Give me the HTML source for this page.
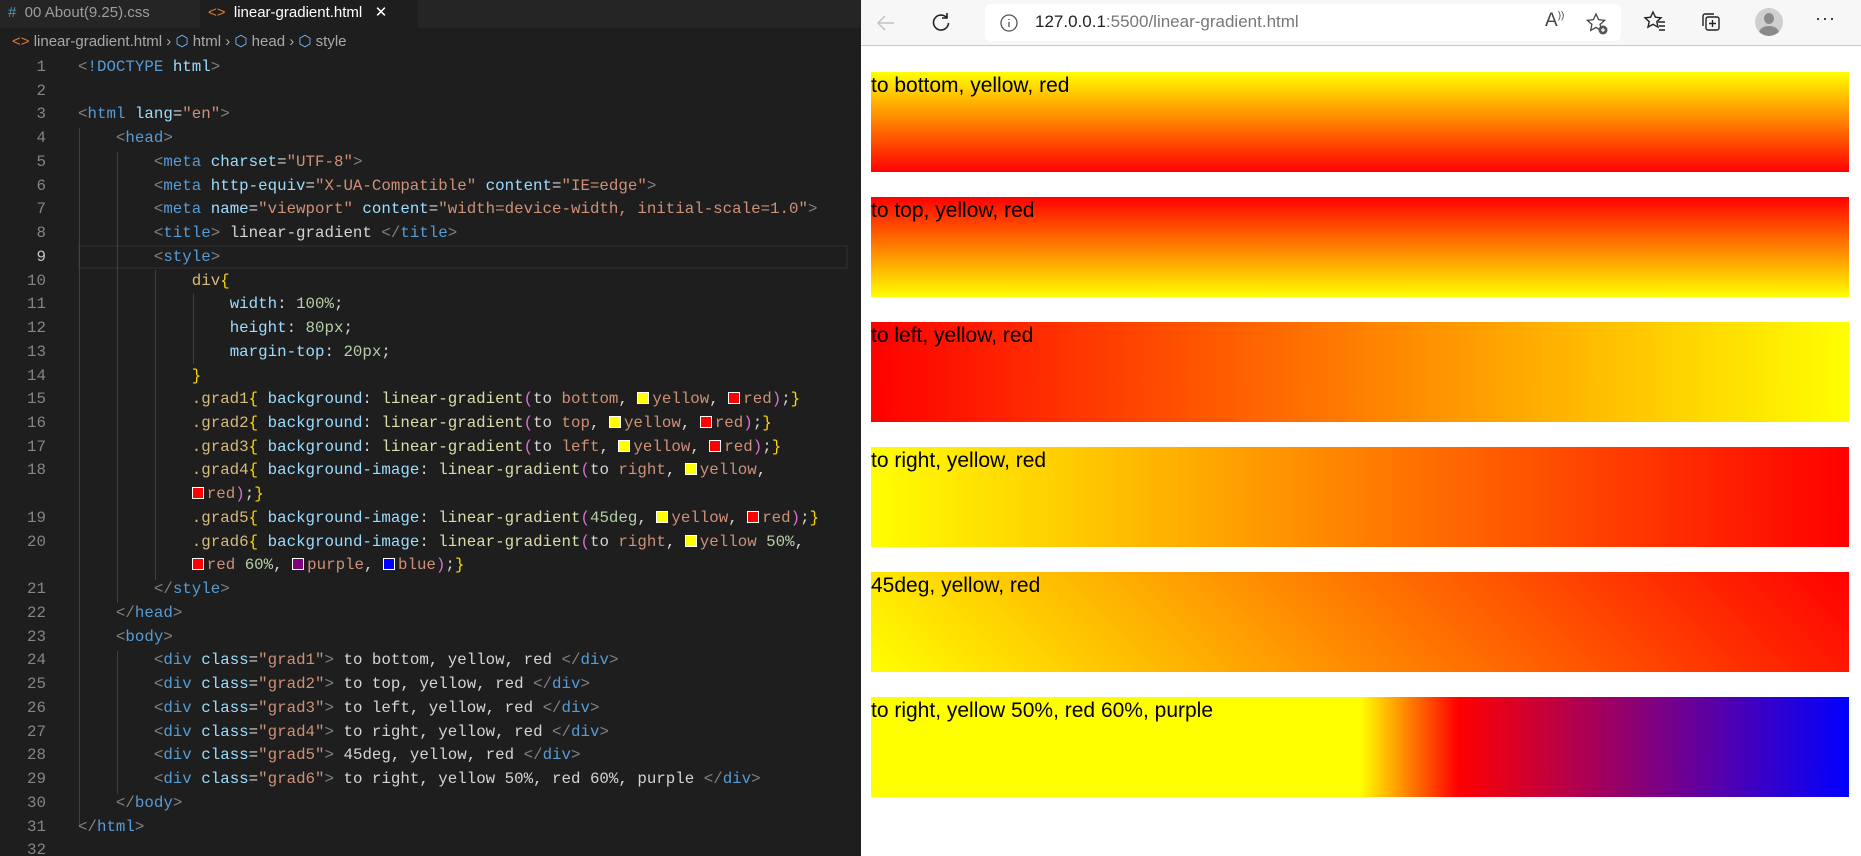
<!DOCTYPE html>
<html><head><meta charset="utf-8">
<style>
*{margin:0;padding:0;box-sizing:border-box}
body{width:1861px;height:856px;overflow:hidden;background:#fff;position:relative;font-family:"Liberation Sans",sans-serif}
#ed{position:absolute;left:0;top:0;width:861px;height:856px;background:#1e1e1e;overflow:hidden}
#tabs{position:absolute;left:0;top:0;width:861px;height:28px;background:#252526}
.tab{position:absolute;top:0;height:28px;font-size:15px;line-height:26px;color:#9d9d9d;padding-left:8px}
#crumb{position:absolute;top:30px;left:12px;font-size:15px;color:#a9a9a9;line-height:24px}
#nums{position:absolute;left:0;top:56px;width:46px;text-align:right;font:15.8px/23.74px "Liberation Mono",monospace;color:#858585;white-space:pre}
#code{position:absolute;left:78px;top:56px;font:15.8px/23.74px "Liberation Mono",monospace;color:#d4d4d4;white-space:pre}
.t{color:#569cd6}.g{color:#808080}.a{color:#9cdcfe}.s{color:#ce9178}.y{color:#ffd700}.sel{color:#d7ba7d}.f{color:#dcdcaa}.p{color:#da70d6}.n{color:#b5cea8}
.sw{display:inline-block;width:12px;height:12px;border:1px solid #fff;margin-right:3px;vertical-align:-1px}
.guide{position:absolute;width:1px;background:#404040}
#cur{position:absolute;left:78px;top:245px;width:770px;height:24px;border:2px solid #282828}
#br{position:absolute;left:861px;top:0;width:1000px;height:856px;background:#fff}
#tb{position:absolute;left:0;top:0;width:1000px;height:46px;background:#f7f7f7;border-bottom:1px solid #c8c8c8}
#addr{position:absolute;left:124px;top:4px;width:636px;height:37px;background:#fff;border-radius:5px}
.box{position:absolute;left:10px;width:978px;height:100px;font-size:21px;line-height:28px;color:#000}
</style></head><body>
<div id="ed">
<div id="tabs">
<div class="tab" style="left:0;width:200px"><span style="color:#519aba">#</span>&nbsp; 00 About(9.25).css</div>
<div class="tab" style="left:200px;width:218px;background:#1e1e1e;color:#fff"><span style="color:#e37933">&lt;&gt;</span>&nbsp; linear-gradient.html&nbsp;&nbsp; ✕</div>
</div>
<div id="crumb"><span style="color:#e37933">&lt;&gt;</span> linear-gradient.html › <span style="color:#75beff">⬡</span> html › <span style="color:#75beff">⬡</span> head › <span style="color:#75beff">⬡</span> style</div>
<div id="cur"></div>
<div class="guide" style="left:79px;top:128px;height:696px"></div>
<div class="guide" style="left:117px;top:152px;height:451px"></div>
<div class="guide" style="left:117px;top:651px;height:143px"></div>
<div class="guide" style="left:155px;top:270px;height:310px"></div>
<div class="guide" style="left:193px;top:294px;height:70px"></div>
<div id="nums">1
2
3
4
5
6
7
8
<span style="color:#c6c6c6">9</span>
10
11
12
13
14
15
16
17
18

19
20

21
22
23
24
25
26
27
28
29
30
31
32</div>
<div id="code"><span class="g">&lt;</span><span class="t">!DOCTYPE</span> <span class="a">html</span><span class="g">&gt;</span>

<span class="g">&lt;</span><span class="t">html</span> <span class="a">lang</span>=<span class="s">"en"</span><span class="g">&gt;</span>
    <span class="g">&lt;</span><span class="t">head</span><span class="g">&gt;</span>
        <span class="g">&lt;</span><span class="t">meta</span> <span class="a">charset</span>=<span class="s">"UTF-8"</span><span class="g">&gt;</span>
        <span class="g">&lt;</span><span class="t">meta</span> <span class="a">http-equiv</span>=<span class="s">"X-UA-Compatible"</span> <span class="a">content</span>=<span class="s">"IE=edge"</span><span class="g">&gt;</span>
        <span class="g">&lt;</span><span class="t">meta</span> <span class="a">name</span>=<span class="s">"viewport"</span> <span class="a">content</span>=<span class="s">"width=device-width, initial-scale=1.0"</span><span class="g">&gt;</span>
        <span class="g">&lt;</span><span class="t">title</span><span class="g">&gt;</span> linear-gradient <span class="g">&lt;/</span><span class="t">title</span><span class="g">&gt;</span>
        <span class="g">&lt;</span><span class="t">style</span><span class="g">&gt;</span>
            <span class="sel">div</span><span class="y">{</span>
                <span class="a">width</span>: <span class="n">100%</span>;
                <span class="a">height</span>: <span class="n">80px</span>;
                <span class="a">margin-top</span>: <span class="n">20px</span>;
            <span class="y">}</span>
            <span class="sel">.grad1</span><span class="y">{</span> <span class="a">background</span>: <span class="f">linear-gradient</span><span class="p">(</span>to <span class="s">bottom</span>, <span class="sw" style="background:#ff0"></span><span class="s">yellow</span>, <span class="sw" style="background:red"></span><span class="s">red</span><span class="p">)</span>;<span class="y">}</span>
            <span class="sel">.grad2</span><span class="y">{</span> <span class="a">background</span>: <span class="f">linear-gradient</span><span class="p">(</span>to <span class="s">top</span>, <span class="sw" style="background:#ff0"></span><span class="s">yellow</span>, <span class="sw" style="background:red"></span><span class="s">red</span><span class="p">)</span>;<span class="y">}</span>
            <span class="sel">.grad3</span><span class="y">{</span> <span class="a">background</span>: <span class="f">linear-gradient</span><span class="p">(</span>to <span class="s">left</span>, <span class="sw" style="background:#ff0"></span><span class="s">yellow</span>, <span class="sw" style="background:red"></span><span class="s">red</span><span class="p">)</span>;<span class="y">}</span>
            <span class="sel">.grad4</span><span class="y">{</span> <span class="a">background-image</span>: <span class="f">linear-gradient</span><span class="p">(</span>to <span class="s">right</span>, <span class="sw" style="background:#ff0"></span><span class="s">yellow</span>,
            <span class="sw" style="background:red"></span><span class="s">red</span><span class="p">)</span>;<span class="y">}</span>
            <span class="sel">.grad5</span><span class="y">{</span> <span class="a">background-image</span>: <span class="f">linear-gradient</span><span class="p">(</span><span class="n">45deg</span>, <span class="sw" style="background:#ff0"></span><span class="s">yellow</span>, <span class="sw" style="background:red"></span><span class="s">red</span><span class="p">)</span>;<span class="y">}</span>
            <span class="sel">.grad6</span><span class="y">{</span> <span class="a">background-image</span>: <span class="f">linear-gradient</span><span class="p">(</span>to <span class="s">right</span>, <span class="sw" style="background:#ff0"></span><span class="s">yellow</span> <span class="n">50%</span>,
            <span class="sw" style="background:red"></span><span class="s">red</span> <span class="n">60%</span>, <span class="sw" style="background:purple"></span><span class="s">purple</span>, <span class="sw" style="background:blue"></span><span class="s">blue</span><span class="p">)</span>;<span class="y">}</span>
        <span class="g">&lt;/</span><span class="t">style</span><span class="g">&gt;</span>
    <span class="g">&lt;/</span><span class="t">head</span><span class="g">&gt;</span>
    <span class="g">&lt;</span><span class="t">body</span><span class="g">&gt;</span>
        <span class="g">&lt;</span><span class="t">div</span> <span class="a">class</span>=<span class="s">"grad1"</span><span class="g">&gt;</span> to bottom, yellow, red <span class="g">&lt;/</span><span class="t">div</span><span class="g">&gt;</span>
        <span class="g">&lt;</span><span class="t">div</span> <span class="a">class</span>=<span class="s">"grad2"</span><span class="g">&gt;</span> to top, yellow, red <span class="g">&lt;/</span><span class="t">div</span><span class="g">&gt;</span>
        <span class="g">&lt;</span><span class="t">div</span> <span class="a">class</span>=<span class="s">"grad3"</span><span class="g">&gt;</span> to left, yellow, red <span class="g">&lt;/</span><span class="t">div</span><span class="g">&gt;</span>
        <span class="g">&lt;</span><span class="t">div</span> <span class="a">class</span>=<span class="s">"grad4"</span><span class="g">&gt;</span> to right, yellow, red <span class="g">&lt;/</span><span class="t">div</span><span class="g">&gt;</span>
        <span class="g">&lt;</span><span class="t">div</span> <span class="a">class</span>=<span class="s">"grad5"</span><span class="g">&gt;</span> 45deg, yellow, red <span class="g">&lt;/</span><span class="t">div</span><span class="g">&gt;</span>
        <span class="g">&lt;</span><span class="t">div</span> <span class="a">class</span>=<span class="s">"grad6"</span><span class="g">&gt;</span> to right, yellow 50%, red 60%, purple <span class="g">&lt;/</span><span class="t">div</span><span class="g">&gt;</span>
    <span class="g">&lt;/</span><span class="t">body</span><span class="g">&gt;</span>
<span class="g">&lt;/</span><span class="t">html</span><span class="g">&gt;</span>
</div>
</div>
<div id="br">
<div id="tb">
<svg style="position:absolute;left:14px;top:12px" width="22" height="22" viewBox="0 0 22 22" fill="none" stroke="#c4c4c4" stroke-width="1.5"><path d="M19 11H3M10 4l-7 7 7 7"/></svg>
<svg style="position:absolute;left:69px;top:11px" width="22" height="22" viewBox="0 0 22 22" fill="none" stroke="#222" stroke-width="1.6"><path d="M17 7A7.5 7.5 0 1 0 18.5 12M17 2v5h-5"/></svg>
<div id="addr">
<svg style="position:absolute;left:14px;top:9px" width="20" height="20" viewBox="0 0 20 20" fill="none" stroke="#555" stroke-width="1.3"><circle cx="10" cy="10" r="8"/><path d="M10 9v5M10 6v1"/></svg>
<div style="position:absolute;left:50px;top:8px;font-size:17px;color:#222">127.0.0.1<span style="color:#777">:5500/linear-gradient.html</span></div>
<div style="position:absolute;left:560px;top:6px;font-size:19px;color:#444">A<sup style="font-size:10px">))</sup></div>
<svg style="position:absolute;left:600px;top:8px" width="24" height="24" viewBox="0 0 24 24" fill="none" stroke="#444" stroke-width="1.3"><path d="M11 2l2.6 5.6 6 .7-4.5 4.1 1.2 6L11 15.4 5.7 18.4l1.2-6L2.4 8.3l6-.7z"/><circle cx="18" cy="18" r="4.5" fill="#555" stroke="none"/><path d="M18 16v4M16 18h4" stroke="#fff"/></svg>
</div>
<svg style="position:absolute;left:782px;top:10px" width="24" height="24" viewBox="0 0 24 24" fill="none" stroke="#222" stroke-width="1.4"><path d="M10 2l2.4 5.2 5.6.6-4.2 3.8 1.2 5.5L10 14.3 5 17.1l1.2-5.5L2 7.8l5.6-.6z"/><path d="M15 12h7M16 16h6M16 20h6"/></svg>
<svg style="position:absolute;left:838px;top:10px" width="24" height="24" viewBox="0 0 24 24" fill="none" stroke="#222" stroke-width="1.4"><rect x="7" y="7" width="13" height="13" rx="2"/><path d="M4 16V6a2 2 0 0 1 2-2h9M13.5 10v7M10 13.5h7"/></svg>
<div style="position:absolute;left:894px;top:8px;width:28px;height:28px;border-radius:50%;background:#cfcfcf;overflow:hidden"><div style="position:absolute;left:9px;top:5px;width:10px;height:11px;border-radius:50%;background:#8a8a8a"></div><div style="position:absolute;left:4px;top:18px;width:20px;height:14px;border-radius:50%;background:#8a8a8a"></div></div>
<div style="position:absolute;left:954px;top:8px;font-size:18px;color:#222;letter-spacing:1px">···</div>
</div>
<div class="box" style="top:72px;background:linear-gradient(to bottom,yellow,red)">to bottom, yellow, red</div>
<div class="box" style="top:197px;background:linear-gradient(to top,yellow,red)">to top, yellow, red</div>
<div class="box" style="top:322px;background:linear-gradient(to left,yellow,red)">to left, yellow, red</div>
<div class="box" style="top:447px;background:linear-gradient(to right,yellow,red)">to right, yellow, red</div>
<div class="box" style="top:572px;background:linear-gradient(45deg,yellow,red)">45deg, yellow, red</div>
<div class="box" style="top:697px;background:linear-gradient(to right,yellow 50%,red 60%,purple,blue)">to right, yellow 50%, red 60%, purple</div>
</div>
</body></html>
